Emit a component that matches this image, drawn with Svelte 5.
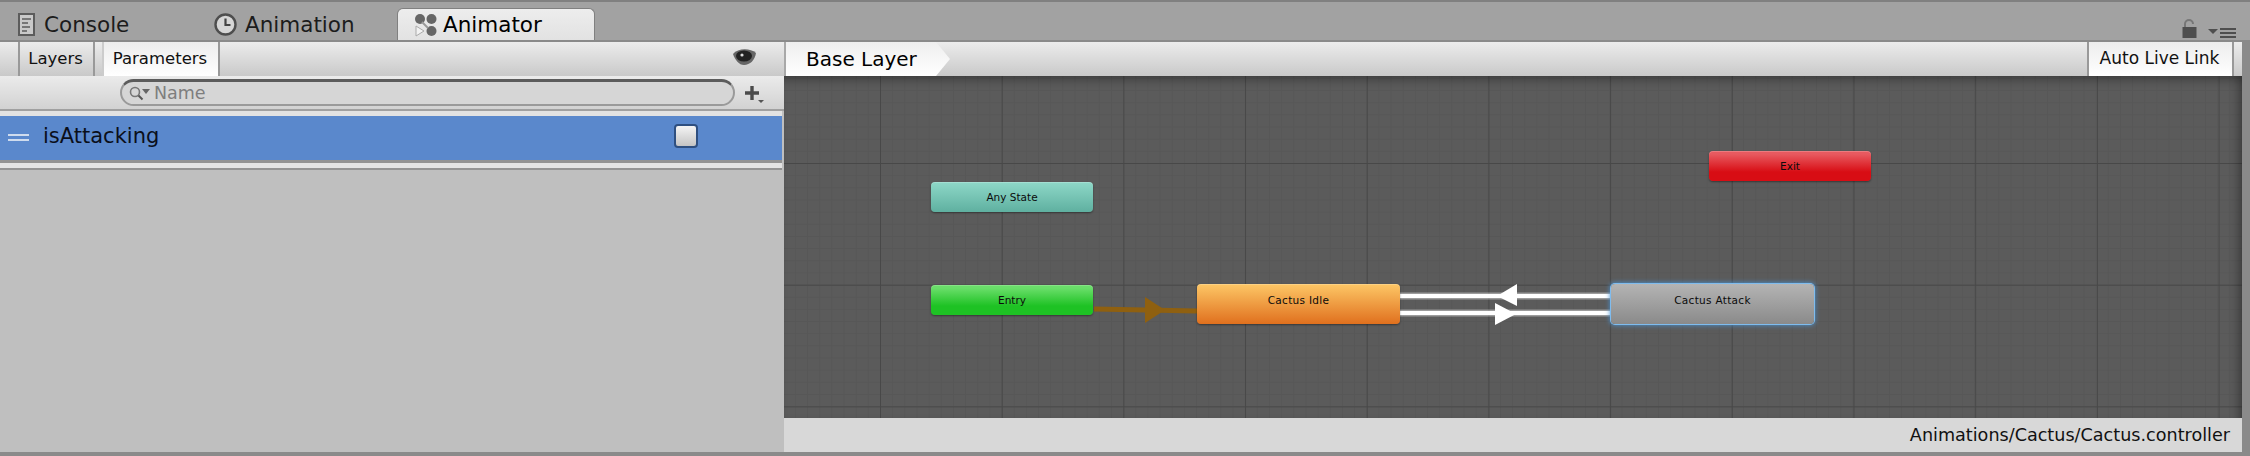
<script>
	const nodes = [
		{ name: 'Any State', cls: 'teal small', x: 147, y: 106 },
		{ name: 'Exit', cls: 'red small', x: 925, y: 75 },
		{ name: 'Entry', cls: 'green small', x: 147, y: 209 },
		{ name: 'Cactus Idle', cls: 'orange big', x: 413, y: 208 },
		{ name: 'Cactus Attack', cls: 'grey big selected', x: 827, y: 208 }
	];
</script>

<div class="window">
	<header class="tabstrip">
		<div class="tab">
			<svg width="17" height="23" viewBox="0 0 17 23">
				<rect x="1" y="1" width="15" height="21" fill="#c9c9c9" stroke="#5c5c5c" stroke-width="2" />
				<path d="M4 6h9M4 10h6M4 14h8M4 18h5" stroke="#777" stroke-width="2" />
			</svg>
			<span>Console</span>
		</div>
		<div class="tab animation">
			<svg width="23" height="23" viewBox="0 0 23 23">
				<circle cx="11.5" cy="11.5" r="10" fill="#d6d6d6" stroke="#4e4e4e" stroke-width="2.4" />
				<path d="M11.5 5.5v6.5h5" fill="none" stroke="#444" stroke-width="2.2" />
			</svg>
			<span>Animation</span>
		</div>
		<div class="tab active">
			<svg width="23" height="24" viewBox="0 0 23 24">
				<circle cx="6" cy="6" r="5" fill="#666" />
				<circle cx="17.5" cy="6" r="5" fill="#666" />
				<circle cx="17.5" cy="18" r="5" fill="#666" />
				<path d="M8 9l6 6" stroke="#999" stroke-width="2" />
				<path d="M2 13l8 5-8 5z" fill="#f2f2f2" stroke="#aaa" />
			</svg>
			<span>Animator</span>
		</div>
		<div class="strip-icons">
			<svg width="15" height="19" viewBox="0 0 15 19">
				<path d="M3 8V5a4 4 0 0 1 8 0" fill="none" stroke="#777" stroke-width="2" />
				<rect x="0.5" y="8" width="14" height="11" fill="#4e4e4e" />
			</svg>
			<svg width="28" height="10" viewBox="0 0 28 10">
				<path d="M0 1h10L5 6z" fill="#4e4e4e" />
				<path d="M12 1h16M12 5h16M12 9h16" stroke="#4e4e4e" stroke-width="2" />
			</svg>
		</div>
	</header>

	<div class="content">
		<aside class="left">
			<div class="toolbar left-bar">
				<button class="tool">Layers</button>
				<button class="tool on">Parameters</button>
				<svg class="eye" width="25" height="18" viewBox="0 0 25 18">
					<path d="M1 6C6 0 18 0 24 5c-1 7-6 12-12 12C7 17 3 12 1 6z" fill="#666" />
					<ellipse cx="12" cy="8" rx="8" ry="5.5" fill="#222" />
					<circle cx="10" cy="7" r="1.6" fill="#ddd" />
				</svg>
			</div>
			<div class="searchrow">
				<div class="search">
					<svg width="25" height="18" viewBox="0 0 25 18">
						<circle cx="8" cy="8" r="4.5" fill="none" stroke="#777" stroke-width="1.6" />
						<path d="M11.5 11.5l4 4" stroke="#555" stroke-width="2" />
						<path d="M15 5h8l-4 5z" fill="#666" />
					</svg>
					<span>Name</span>
				</div>
				<svg class="plus" width="20" height="19" viewBox="0 0 20 19">
					<path d="M8 1v14M1 8h14" stroke="#4b4b4b" stroke-width="3.4" />
					<path d="M14 15h6l-3 3z" fill="#555" />
				</svg>
			</div>
			<div class="param">
				<span class="grip"></span>
				<span class="pname">isAttacking</span>
				<span class="check"></span>
			</div>
			<div class="listfoot"></div>
		</aside>

		<main class="right">
			<div class="toolbar right-bar">
				<div class="crumb">Base Layer</div>
				<button class="tool on live">Auto Live Link</button>
			</div>
			<div class="graph">
				<svg class="edges" width="1458" height="342" viewBox="0 0 1458 342">
					<path d="M310 233L413 235" stroke="#8f6010" stroke-width="5" />
					<path d="M361 221L381 234 361 247z" fill="#8f6010" />
					<path d="M616 220H827M616 237H827" stroke="#fff" stroke-opacity="0.4" stroke-width="7" />
					<path d="M616 220H827M616 237H827" stroke="#fff" stroke-width="4" />
					<path d="M713 220L733 208V230z" fill="#fff" />
					<path d="M711 227L732 238 711 249z" fill="#fff" />
				</svg>
				{#each nodes as n (n.name)}
					<div class="node {n.cls}" style="left: {n.x}px; top: {n.y}px">{n.name}</div>
				{/each}
			</div>
			<footer class="status">Animations/Cactus/Cactus.controller</footer>
		</main>
	</div>
</div>

<style>
	:global(body) {
		margin: 0;
		background: #8a8a8a;
	}

	.window {
		width: 2250px;
		height: 456px;
		display: flex;
		flex-direction: column;
		overflow: hidden;
		font-family: 'DejaVu Sans', sans-serif;
		color: #111;
	}

	.tabstrip {
		height: 38px;
		flex: none;
		display: flex;
		align-items: flex-end;
		background: #a2a2a2;
		border-top: 2px solid #808080;
		border-bottom: 2px solid #8a8a8a;
		box-sizing: content-box;
		padding-left: 18px;
	}

	.tab {
		height: 32px;
		display: flex;
		align-items: center;
		gap: 9px;
		font-size: 21.5px;
		color: #1c1c1c;
		width: 186px;
		box-sizing: border-box;
	}

	.tab.animation {
		width: 190px;
		padding-left: 10px;
		gap: 8px;
	}

	.tab.active {
		width: 198px;
		margin-left: 3px;
		padding-left: 16px;
		background: linear-gradient(#ededed, #e2e2e2);
		border: 1px solid #808080;
		border-bottom: 0;
		border-radius: 6px 6px 0 0;
		color: #000;
		gap: 6px;
	}

	.strip-icons {
		margin-left: auto;
		display: flex;
		align-items: flex-end;
		gap: 11px;
		padding: 0 14px 2px 0;
	}

	.content {
		flex: 1;
		display: flex;
		min-height: 0;
		padding-right: 8px;
		border-bottom: 4px solid #8a8a8a;
	}

	.left {
		width: 784px;
		flex: none;
		background: #bfbfbf;
		display: flex;
		flex-direction: column;
	}

	.toolbar {
		height: 34px;
		flex: none;
		display: flex;
		align-items: stretch;
		background: linear-gradient(#ececec, #c9c9c9);
	}

	.left-bar {
		padding-left: 18px;
		gap: 7px;
		position: relative;
		align-items: stretch;
	}

	.tool {
		font: inherit;
		font-size: 16.5px;
		color: #111;
		border: 0;
		border-left: 2px solid #999;
		border-right: 2px solid #999;
		background: transparent;
		padding: 0 2px 2px 0;
		width: 77px;
	}

	.tool.on {
		width: 118px;
		background: linear-gradient(#ededed, #fff);
		border-left-color: #ccc;
	}

	.eye {
		margin: 6px 27px 0 auto;
	}

	.searchrow {
		height: 33px;
		flex: none;
		display: flex;
		align-items: center;
		padding-left: 120px;
		background: linear-gradient(#ebebeb, #d2d2d2);
		border-bottom: 2px solid #a0a0a0;
		gap: 9px;
	}

	.search {
		width: 615px;
		height: 27px;
		box-sizing: border-box;
		display: flex;
		align-items: center;
		gap: 2px;
		padding-left: 5px;
		border-radius: 14px;
		border: 2px solid #9a9a9a;
		border-top: 3px solid #5c5c5c;
		background: #d6d6d6;
		color: #7e7e7e;
		font-size: 17.5px;
	}

	.plus {
		margin-top: 3px;
	}

	.param {
		margin-top: 5px;
		height: 44px;
		flex: none;
		width: 782px;
		display: flex;
		align-items: center;
		background: #5a88cc;
		box-shadow: 0 -5px 0 #e2e2e2;
		position: relative;
	}

	.grip {
		width: 21px;
		height: 3px;
		margin-left: 8px;
		border-top: 2px solid #cfdcee;
		border-bottom: 2px solid #cfdcee;
		box-sizing: content-box;
		margin-bottom: 2px;
	}

	.pname {
		margin: 0 0 5px 14px;
		font-size: 21px;
		color: #0a0f1a;
	}

	.check {
		position: absolute;
		left: 674px;
		top: 8px;
		width: 24px;
		height: 24px;
		box-sizing: border-box;
		border: 2px solid #2e4f80;
		border-radius: 4px;
		background: linear-gradient(#f4f4f4, #c4c4c4);
	}

	.listfoot {
		width: 782px;
		height: 5px;
		border-top: 3px solid #929292;
		border-bottom: 2px solid #939393;
		background: #e3e3e3;
	}

	.right {
		flex: 1;
		min-width: 0;
		display: flex;
		flex-direction: column;
	}

	.right-bar {
		justify-content: space-between;
		border-left: 2px solid #a8a8a8;
		padding-right: 8px;
	}

	.crumb {
		width: 164px;
		box-sizing: border-box;
		padding-left: 20px;
		display: flex;
		align-items: center;
		font-size: 20px;
		color: #000;
		background: linear-gradient(#eeeeee, #fff);
		clip-path: polygon(0 0, 150px 0, 164px 50%, 150px 100%, 0 100%);
	}

	.tool.live {
		width: 147px;
		font-size: 17px;
		border-left-color: #999;
	}

	.graph {
		flex: 1;
		position: relative;
		background-color: #5b5b5b;
		background-image:
			linear-gradient(#484848 1px, transparent 1px),
			linear-gradient(90deg, #484848 1px, transparent 1px),
			linear-gradient(#575757 1px, transparent 1px),
			linear-gradient(90deg, #575757 1px, transparent 1px);
		background-size: 121.7px 121.7px, 121.7px 121.7px, 12.17px 12.17px, 12.17px 12.17px;
		background-position: 96px 87px, 96px 87px, 96px 87px, 96px 87px;
		box-shadow: inset 0 10px 10px -6px rgba(0, 0, 0, 0.3), inset -10px 0 10px -6px rgba(0, 0, 0, 0.3);
		overflow: hidden;
	}

	.edges {
		position: absolute;
		left: 0;
		top: 0;
	}

	.node {
		position: absolute;
		box-sizing: border-box;
		display: flex;
		justify-content: center;
		color: #0b0b0b;
		font-size: 10.5px;
		border-radius: 4px;
		box-shadow: 0 1px 2px rgba(0, 0, 0, 0.4), inset 0 1px rgba(255, 255, 255, 0.2);
	}

	.small {
		width: 162px;
		height: 30px;
		align-items: center;
		padding-bottom: 1px;
	}

	.big {
		width: 203px;
		height: 40px;
		padding-top: 10px;
		letter-spacing: 0.3px;
	}

	.teal {
		background: linear-gradient(#8ed8c8, #5fb0a0);
	}

	.red {
		background: linear-gradient(#e85a60 10%, #d80d14 70%);
	}

	.green {
		background: linear-gradient(#6ade6a 10%, #1ec224 70%);
	}

	.orange {
		background: linear-gradient(#fdc766, #e0701e);
	}

	.grey {
		background: linear-gradient(#b4b4b4, #8a8a8a);
	}

	.selected {
		box-shadow: 0 0 0 1px #7fbcee, 0 0 5px 1px #4a97dc;
	}

	.status {
		height: 34px;
		flex: none;
		box-sizing: border-box;
		display: flex;
		align-items: center;
		justify-content: flex-end;
		padding-right: 12px;
		background: #d8d8d8;
		font-size: 17.6px;
		color: #111;
	}
</style>
